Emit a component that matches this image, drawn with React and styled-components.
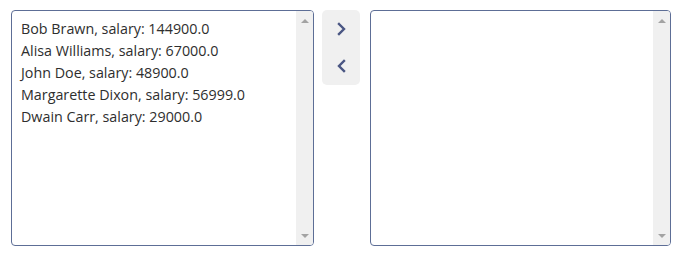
import React from "react";
import styled, { createGlobalStyle } from "styled-components";

const GlobalStyle = createGlobalStyle`
  body {
    margin: 0;
    background: #ffffff;
    font-family: "Open Sans", "Liberation Sans", sans-serif;
  }
`;

const employees = [
  "Bob Brawn, salary: 144900.0",
  "Alisa Williams, salary: 67000.0",
  "John Doe, salary: 48900.0",
  "Margarette Dixon, salary: 56999.0",
  "Dwain Carr, salary: 29000.0",
];

function Chevron({ dir }) {
  const d = dir === "right" ? "M4 2 L9 7 L4 12" : "M9 2 L4 7 L9 12";
  return (
    <svg width="13" height="14" viewBox="0 0 13 14">
      <path d={d} fill="none" stroke="#4a5683" strokeWidth="2.4" strokeLinecap="square" />
    </svg>
  );
}

function ListPanel({ width, items = [] }) {
  return (
    <ListBox width={width}>
      <ListContent>
        {items.map((item) => (
          <Item key={item}>{item}</Item>
        ))}
      </ListContent>
      <Scrollbar>
        <ScrollArrow />
        <ScrollArrow down />
      </Scrollbar>
    </ListBox>
  );
}

function App() {
  return (
    <Wrapper>
      <GlobalStyle />
      <ListPanel width={303} items={employees} />
      <Controls>
        <ArrowButton>
          <Chevron dir="right" />
        </ArrowButton>
        <ArrowButton>
          <Chevron dir="left" />
        </ArrowButton>
      </Controls>
      <ListPanel width={301} />
    </Wrapper>
  );
}

const Wrapper = styled.div`
  display: flex;
  align-items: flex-start;
  padding: 10px 0 0 11px;
  gap: 8px;
`;

const ListBox = styled.div`
  box-sizing: border-box;
  display: flex;
  width: ${(p) => p.width}px;
  height: 236px;
  border: 1px solid #5d6e96;
  border-radius: 4px;
  overflow: hidden;
`;

const ListContent = styled.div`
  flex: 1;
  padding: 7px 0 0 9px;
  color: #2e2e2e;
  font-size: 14.3px;
  line-height: 22px;
`;

const Item = styled.div`
  white-space: nowrap;
`;

const Scrollbar = styled.div`
  width: 17px;
  background: #f0f0f0;
  display: flex;
  flex-direction: column;
  justify-content: space-between;
  align-items: center;
  padding: 8px 0 7px;
`;

const ScrollArrow = styled.div`
  width: 0;
  height: 0;
  border-left: 4px solid transparent;
  border-right: 4px solid transparent;
  ${(p) =>
    p.down
      ? "border-top: 4px solid #a3a3a3;"
      : "border-bottom: 4px solid #a3a3a3;"}
`;

const Controls = styled.div`
  display: flex;
  flex-direction: column;
  width: 38px;
  height: 75px;
  background: #f0f0f0;
  border-radius: 5px;
  margin-right: 2px;
`;

const ArrowButton = styled.button`
  flex: 1;
  display: flex;
  align-items: center;
  justify-content: center;
  background: none;
  border: none;
  padding: 0;
  cursor: pointer;
`;

export default App;
